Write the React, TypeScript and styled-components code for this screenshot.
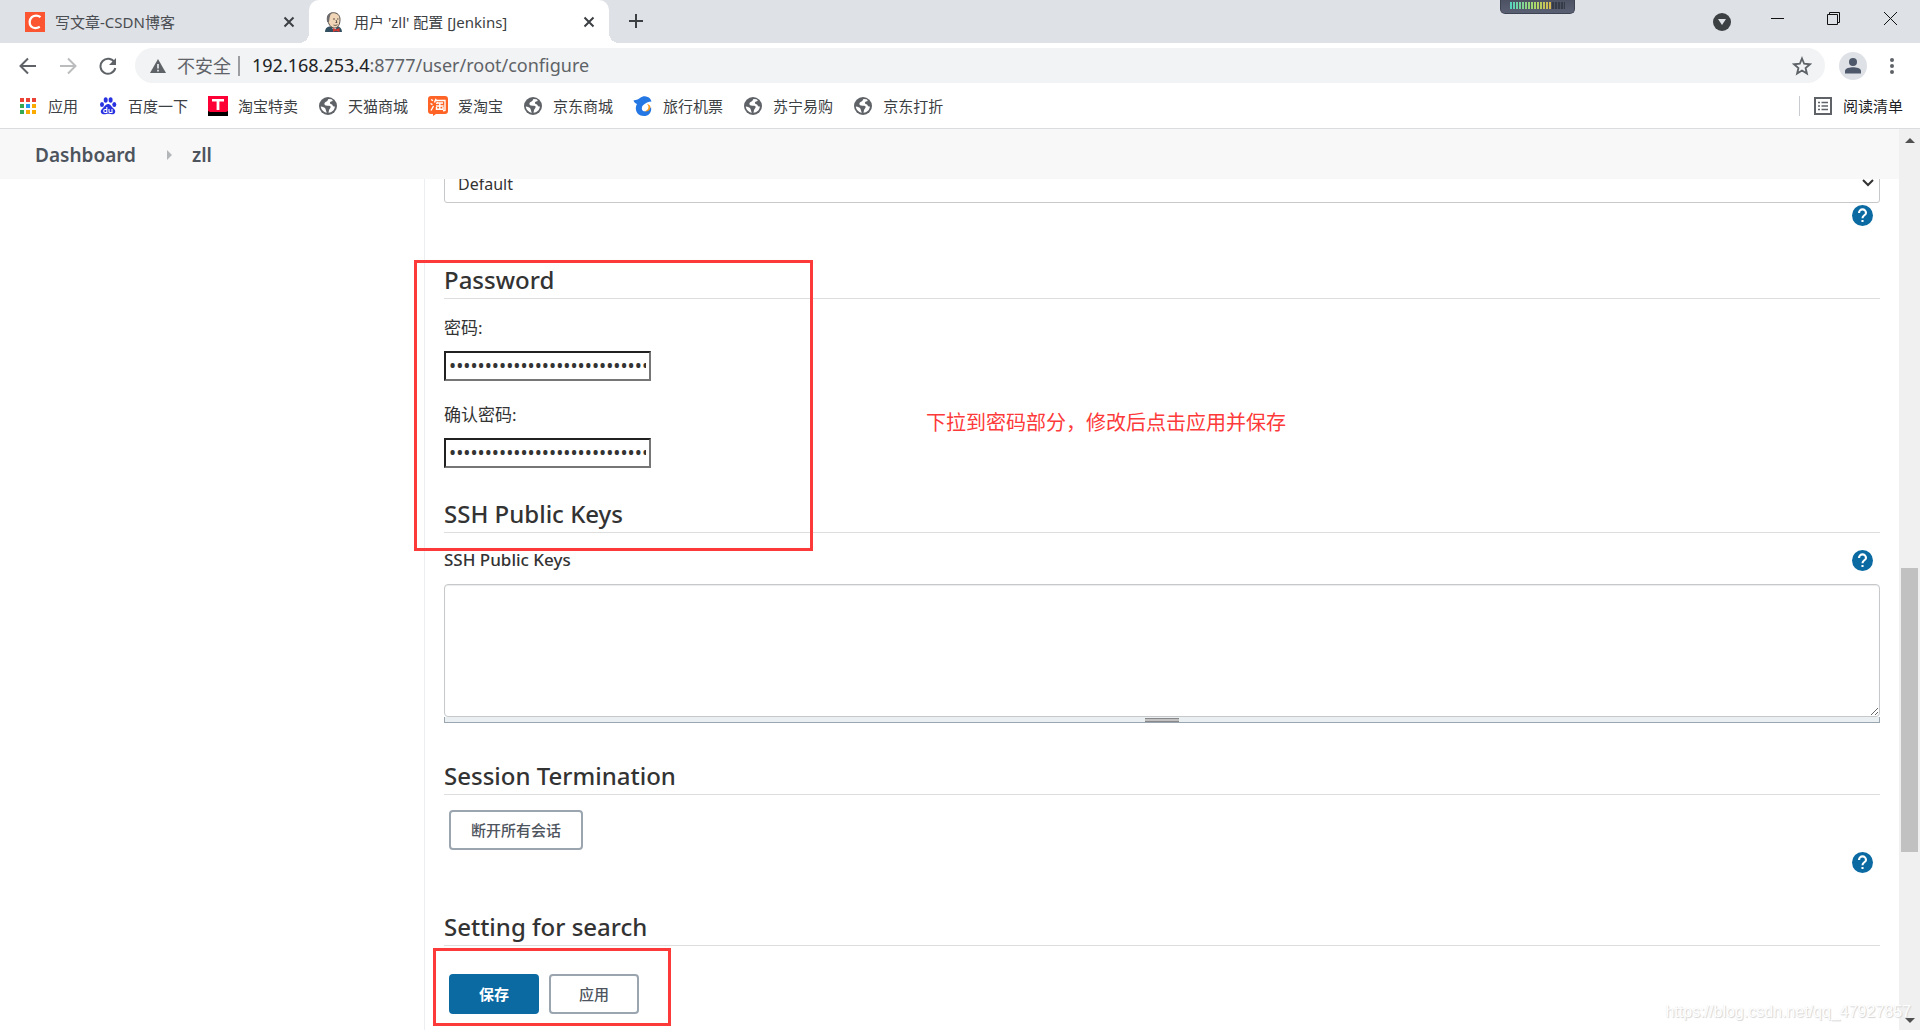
import React from "react";
import styled, { createGlobalStyle } from "styled-components";

const ui = `"Noto Sans", "Noto Sans CJK SC", sans-serif`;

const GlobalStyle = createGlobalStyle`
  *, *::before, *::after { box-sizing: border-box; }
  html, body, #root { height: 100%; }
  body { margin: 0; background: #fff; color: #333; font-family: ${ui}; overflow: hidden; }
  button, input, select, textarea { font-family: inherit; margin: 0; }
`;

const Window = styled.div`
  display: flex;
  flex-direction: column;
  height: 100vh;
  position: relative;
  overflow: hidden;
`;

const PlainButton = styled.button<{ $size?: number }>`
  display: inline-flex;
  flex: none;
  align-items: center;
  justify-content: center;
  width: ${(p) => p.$size ?? 24}px;
  height: ${(p) => p.$size ?? 24}px;
  padding: 0;
  border: 0;
  background: none;
  color: #5f6368;
`;

/* ---------- tab strip ---------- */

const TabStrip = styled.div`
  display: flex;
  flex: none;
  height: 43px;
  background: #dee1e6;
`;

const Tab = styled.div<{ $active?: boolean }>`
  position: relative;
  display: flex;
  align-items: center;
  gap: 10px;
  width: ${(p) => (p.$active ? 300 : 309)}px;
  padding: 0 8px 0 ${(p) => (p.$active ? 15 : 25)}px;
  border-radius: 10px 10px 0 0;
  background: ${(p) => (p.$active ? "#fff" : "transparent")};
  color: ${(p) => (p.$active ? "#3c4043" : "#4a4d51")};
  font-size: 15px;

  &::before, &::after {
    content: "";
    display: ${(p) => (p.$active ? "block" : "none")};
    position: absolute;
    bottom: 0;
    width: 10px;
    height: 10px;
  }
  &::before {
    right: 100%;
    background: radial-gradient(circle at 0 0, transparent 10px, #fff 10px);
  }
  &::after {
    left: 100%;
    background: radial-gradient(circle at 100% 0, transparent 10px, #fff 10px);
  }
`;

const TabTitle = styled.span`
  flex: 1;
  white-space: nowrap;
`;

const NewTab = styled(PlainButton)`
  margin: 9px 0 0 15px;
  color: #3c4043;
`;

const WindowControls = styled.div`
  display: flex;
  align-items: center;
  height: 37px;
  margin-left: auto;
  color: #000;
`;

const ControlButton = styled(PlainButton)<{ $wide?: boolean }>`
  width: ${(p) => (p.$wide ? 58 : 56)}px;
  color: #111;
`;

const Meter = styled.div`
  position: absolute;
  top: 0;
  right: 345px;
  width: 75px;
  height: 14px;
  padding: 2px 9px 0;
  border: 1px solid #3e4352;
  border-top: 0;
  border-radius: 0 0 5px 5px;
  background: linear-gradient(#4d5263, #5a6073);
`;

const MeterBars = styled.div`
  height: 7px;
  background:
    repeating-linear-gradient(90deg, transparent 0 2px, #4d5263 2px 3px),
    linear-gradient(90deg, #55d6c2, #a9d86a 45%, #d9b64c 75%, #363b48 75%);
`;

/* ---------- toolbar ---------- */

const Toolbar = styled.div`
  display: flex;
  flex: none;
  align-items: center;
  height: 45px;
  padding: 0 16px;
`;

const NavButtons = styled.div`
  display: flex;
  gap: 16px;
  margin-right: 15px;
`;

const Omnibox = styled.div`
  display: flex;
  flex: 1;
  align-items: center;
  height: 35px;
  padding: 0 11px 0 14px;
  border-radius: 18px;
  background: #f1f3f4;
  color: #5f6368;
  font-size: 18px;
`;

const Insecure = styled.span`
  display: flex;
  align-items: center;
  gap: 10px;
  padding-right: 7px;
  margin-right: 12px;
  line-height: 20px;
  border-right: 2px solid #9b9da1;
`;

const Url = styled.span`
  flex: 1;
  padding-bottom: 2px;
  b { color: #202124; font-weight: 400; }
`;

const Avatar = styled(PlainButton)`
  margin: 0 13px 0 14px;
  border-radius: 50%;
  background: #dee1e6;
`;

/* ---------- bookmarks ---------- */

const Bookmarks = styled.nav`
  display: flex;
  flex: none;
  align-items: center;
  gap: 20px;
  height: 41px;
  padding: 0 18px 5px;
  border-bottom: 1px solid #dadce0;
`;

const Bookmark = styled.a`
  display: flex;
  align-items: center;
  gap: 10px;
  color: #3c4043;
  font-size: 15px;
  line-height: 20px;
  text-decoration: none;
  white-space: nowrap;
  svg { flex: none; }
`;

const ReadingList = styled(Bookmark)`
  margin-left: auto;
  margin-right: -1px;
  padding-left: 13px;
  border-left: 1px solid #c8cbcf;
  color: #202124;
`;

/* ---------- page ---------- */

const Page = styled.div`
  display: flex;
  flex: 1;
  min-height: 0;
`;

const Document = styled.div`
  display: flex;
  flex: 1;
  flex-direction: column;
  min-width: 0;
`;

const Breadcrumbs = styled.nav`
  display: flex;
  flex: none;
  align-items: center;
  height: 50px;
  padding: 2px 35px 0;
  background: #f8f8f8;
`;

const Crumb = styled.a`
  color: #4d545d;
  font-size: 19px;
  font-weight: 600;
  text-decoration: none;
`;

const CrumbArrow = styled.span`
  margin: 0 20px 0 31px;
  border: 5px solid transparent;
  border-left-color: #b4b7ba;
  border-right-width: 0;
`;

const Body = styled.div`
  display: grid;
  flex: 1;
  grid-template-columns: 424px 1fr;
  min-height: 0;
  overflow: hidden;
`;

const Main = styled.main`
  min-width: 0;
  padding: 0 19px;
  border-left: 1px solid #ebeff2;
`;

const SelectField = styled.div`
  position: relative;
  margin-top: -16px;
  svg {
    position: absolute;
    top: 15px;
    right: 6px;
    pointer-events: none;
  }
`;

const SelectBox = styled.select`
  display: block;
  width: 100%;
  height: 40px;
  padding: 2px 13px 0;
  border: 1px solid #c6c8ca;
  border-radius: 3px;
  appearance: none;
  background: #fff;
  color: #333;
  font-size: 16px;
`;

const HelpRow = styled.div`
  display: flex;
  justify-content: flex-end;
  padding: 2px 7px 0 0;
`;

const Section = styled.section<{ $height: number }>`
  min-height: ${(p) => p.$height}px;
`;

const Heading = styled.h2`
  margin: 0 0 15px;
  padding-bottom: 2px;
  border-bottom: 1px solid #dedede;
  color: #333;
  font-size: 24px;
  font-weight: 500;
  line-height: 32px;
`;

const Field = styled.div`
  display: flex;
  flex-direction: column;
  align-items: flex-start;
  gap: 9px;
  margin-bottom: 20px;
`;

const FieldLabel = styled.label`
  font-size: 17px;
  line-height: 28px;
`;

const PasswordInput = styled.input`
  width: 207px;
  height: 30px;
  padding: 1px 3px;
  border: 2px inset #767676;
  border-radius: 0;
  background: #fff;
  color: #333;
  font-size: 19px;
`;

const LabelRow = styled.div`
  display: flex;
  align-items: center;
  justify-content: space-between;
  margin-bottom: 12px;
  padding-right: 7px;
`;

const KeysLabel = styled.label`
  font-size: 17px;
  font-weight: 500;
  line-height: 24px;
`;

const KeysArea = styled.textarea`
  display: block;
  width: 100%;
  height: 133px;
  border: 1px solid #c6c8ca;
  border-radius: 4px;
  background: #fff;
  box-shadow: inset 0 1px 1px rgba(0, 0, 0, 0.08);
`;

const Grip = styled.div`
  display: flex;
  justify-content: center;
  height: 6px;
  border: 1px solid #9aa5af;
  border-top: 0;
  background: #eaeff2;
  &::after {
    content: "";
    width: 34px;
    height: 4px;
    margin-top: 1px;
    border: 1px solid #888;
    border-width: 1px 0;
    background: #c2c2c2;
  }
`;

const Actions = styled.div<{ $top?: number }>`
  display: flex;
  gap: 10px;
  padding: ${(p) => p.$top ?? 0}px 5px 0;
`;

const ActionButton = styled.button<{ $primary?: boolean }>`
  min-width: 90px;
  height: 40px;
  padding: 0 20px 1px;
  border: 2px solid ${(p) => (p.$primary ? "#0b6aa2" : "#9aa5af")};
  border-radius: 4px;
  background: ${(p) => (p.$primary ? "#0b6aa2" : "#fff")};
  color: ${(p) => (p.$primary ? "#fff" : "#4d545d")};
  font-size: 15px;
  font-weight: ${(p) => (p.$primary ? 700 : 500)};
`;

const ScrollTrack = styled.div`
  display: flex;
  flex: none;
  flex-direction: column;
  align-items: center;
  width: 21px;
  padding: 9px 0 7px;
  background: #f0f0f0;
`;

const ScrollArrow = styled.span<{ $down?: boolean }>`
  border: 5px solid transparent;
  border-${(p) => (p.$down ? "top" : "bottom")}-color: #505050;
  border-${(p) => (p.$down ? "bottom" : "top")}-width: 0;
  ${(p) => !p.$down && "margin-bottom: 425px;"}
`;

const ScrollThumb = styled.div`
  width: 17px;
  height: 284px;
  margin-bottom: auto;
  background: #c1c1c1;
`;

/* ---------- annotations over the page ---------- */

const Mark = styled.div<{ $x: number; $y: number; $w: number; $h: number }>`
  position: absolute;
  left: ${(p) => p.$x}px;
  top: ${(p) => p.$y}px;
  width: ${(p) => p.$w}px;
  height: ${(p) => p.$h}px;
  border: 3px solid #fd3a3a;
  pointer-events: none;
`;

const Note = styled.p`
  position: absolute;
  left: 926px;
  top: 408px;
  margin: 0;
  color: #fd3a3a;
  font-size: 20px;
  line-height: 30px;
`;

const Watermark = styled.span`
  position: absolute;
  right: 9px;
  bottom: 8px;
  color: #fff;
  font-family: "Liberation Sans", sans-serif;
  font-size: 16px;
  line-height: 20px;
  text-shadow: 1px 1px 1px #d4d4d4, 0 0 1px #e4e4e4;
`;

/* ---------- drawings ---------- */

const CloseIcon = () => (
  <svg width="12" height="12" viewBox="0 0 12 12"><path d="M1.5 1.5l9 9M10.5 1.5l-9 9" stroke="#3c4043" strokeWidth="2" /></svg>
);

const CsdnIcon = () => (
  <svg width="20" height="20" viewBox="0 0 20 20">
    <path fill="#fc5531" d="M0 0h20v20H0z" />
    <path d="M15.5 5.2C13 3 9.200 3 6.800 5.200c-2.600 2.500-2.900 7-.6 9.300 2 2 5.800 2 8.600.3" fill="none" stroke="#fff" strokeWidth="2.300" />
  </svg>
);

const JenkinsIcon = () => (
  <svg width="20" height="20" viewBox="0 0 20 20">
    <path d="M1 20c0-3 1.500-5 4-5.500l8-.5c3 .5 5 2.500 5 6z" fill="#335061" />
    <path d="M7 14l3 5 4-5z" fill="#fff" />
    <path d="M3.500 7C3.500 3 6 .7 9.500.7S16 3 16 7.500c0 5-2 8.500-5.500 8.500S4 12 3.500 7z" fill="#f0d6b7" stroke="#49423d" strokeWidth=".9" />
    <path d="M3.200 10C2 5 3.500 1 8.500.6 5.500 2.500 5.800 6 5 10z" fill="#6d6b6d" />
    <path d="M9 7h2M13 7h1.500M12 8l1 2.500h-1.500M9.500 13c1.500.6 2.500.5 4-.3" stroke="#49423d" strokeWidth=".9" fill="none" />
    <path d="M9 16l3 1.500 3.500-1.500v4l-3.500-1.200L9 20z" fill="#d33833" />
  </svg>
);

const GlobeIcon = () => (
  <svg width="20" height="20" viewBox="0 0 20 20">
    <circle cx="10" cy="10" r="9" fill="#5f6368" />
    <path d="M10.500 3c-1 1-.5 1.800-2 2.500S6 7 6.500 8.500 9 9.500 11 9.700s2 1.500 1 2.800-1 1.500-1.500 4.300c3.500-.2 6.200-3 6.400-6.300-1.400.3-2.200-.5-2.500-1.500s-1.600-.8-2.300-1.600.5-2 1.900-2.200.3-1.700-.5-2z" fill="#fff" />
    <path d="M2.800 10.500c2 .2 4 1 4.500 2s.7 2.300 1.500 4.200c-3.300-.6-5.700-3-6-6.200z" fill="#fff" />
  </svg>
);

const AppsIcon = () => (
  <svg width="20" height="20" viewBox="0 0 20 20">
    {["#ea4335", "#ea4335", "#ea4335", "#34a853", "#2196f3", "#fbab00", "#34a853", "#fbab00", "#fbab00"].map((c, i) => (
      <rect key={i} x={2 + (i % 3) * 6} y={2 + Math.floor(i / 3) * 6} width="4" height="4" fill={c} />
    ))}
  </svg>
);

const BaiduIcon = () => (
  <svg width="20" height="20" viewBox="0 0 20 20" fill="#2932e1">
    <ellipse cx="4" cy="8.500" rx="2" ry="2.600" />
    <ellipse cx="7.700" cy="4" rx="2" ry="2.800" />
    <ellipse cx="12.600" cy="4" rx="2" ry="2.800" />
    <ellipse cx="16.300" cy="8.500" rx="2" ry="2.600" />
    <path d="M10 8c2.500 0 3.300 2.500 5 4s2.500 2.300 2.200 4-1.700 2.500-3.500 2.300-2.300-.5-3.700-.5-2 .5-3.700.5-3.300-.6-3.500-2.300.7-2.500 2.200-4S7.500 8 10 8z" />
    <path d="M8.800 11v5.500H7.200c-2 0-2-3 0-3h1.600M11 13v2.500c0 1 .5 1 1.200 1H14V13" fill="none" stroke="#fff" strokeWidth="1.100" />
  </svg>
);

const TmallIcon = () => (
  <svg width="20" height="20" viewBox="0 0 20 20">
    <path d="M0 0h20v20H0z" /><path d="M0 0h20v15l-2 1H2l-2-1z" fill="#ff0036" />
    <path d="M4 3h12v2.500h-4.600V14H8.600V5.500H4z" fill="#fff" />
  </svg>
);

const TaobaoIcon = () => (
  <svg width="20" height="20" viewBox="0 0 20 20">
    <path d="M3 0h14a3 3 0 013 3v12a3 3 0 01-3 3H8l-3 2v-2H3a3 3 0 01-3-3V3a3 3 0 013-3z" fill="#ff6426" />
    <path d="M3 3.500l2 1.200M2.500 7.500l2 1.200M3 14.500L5.500 10M8 2.800L6.500 6.500M7.500 4.500H17v10l-2 .3M9.500 6l-1 2M9 7h6M8 10h7.500M11.800 7v6M8.500 11v2.300h6.500V11" fill="none" stroke="#fff" strokeWidth="1.400" />
  </svg>
);

const DolphinIcon = () => (
  <svg width="20" height="20" viewBox="0 0 20 20">
    <path d="M.5 4.500C3 4 5 3.500 7 2c2.500-2 5.500-2.200 7.500-1 2 .4 3.200 1.800 4 4.500-1.500 0-3 .2-4.500 1C11 8 9 9.500 8.800 12c-.1 2.500 1.500 3.500 3.500 3.300 2.500-.3 4-1.800 5.700-4.300 1 5-2 9-7 9C6 20 3 17 2.800 12.500 2.700 11 3.200 9.500 4 8 2.500 7.500 1 6.500.5 4.500z" fill="#2577e3" />
    <path d="M14 8c2.800 2.500 1.500 6.300-2.300 7.300 3.800.7 6.300-2 5.500-5.300C16.500 9 15.500 8.300 14 8z" fill="#ff9a14" />
  </svg>
);

const HelpIcon = () => (
  <svg width="21" height="21" viewBox="0 0 24 24">
    <circle cx="12" cy="12" r="12" fill="#0b6aa2" />
    <path d="M8 9a4 4 0 118 0c0 2.600-4 3-4 6M12 17v2.400" fill="none" stroke="#fff" strokeWidth="2.400" />
  </svg>
);

const bookmarks: [string, () => React.ReactElement][] = [
  ["应用", AppsIcon],
  ["百度一下", BaiduIcon],
  ["淘宝特卖", TmallIcon],
  ["天猫商城", GlobeIcon],
  ["爱淘宝", TaobaoIcon],
  ["京东商城", GlobeIcon],
  ["旅行机票", DolphinIcon],
  ["苏宁易购", GlobeIcon],
  ["京东打折", GlobeIcon],
];

const Help = () => (
  <PlainButton $size={21} type="button" aria-label="Help"><HelpIcon /></PlainButton>
);

export default function App() {
  return (
    <Window>
      <GlobalStyle />
      <TabStrip>
        <Tab>
          <CsdnIcon />
          <TabTitle>写文章-CSDN博客</TabTitle>
          <PlainButton aria-label="关闭标签页"><CloseIcon /></PlainButton>
        </Tab>
        <Tab $active>
          <JenkinsIcon />
          <TabTitle>用户 'zll' 配置 [Jenkins]</TabTitle>
          <PlainButton aria-label="关闭标签页"><CloseIcon /></PlainButton>
        </Tab>
        <NewTab aria-label="新标签页">
          <svg width="16" height="16" viewBox="0 0 16 16"><path d="M8 1v14M1 8h14" stroke="currentColor" strokeWidth="2" /></svg>
        </NewTab>
        <WindowControls>
          <ControlButton aria-label="搜索标签页">
            <svg width="18" height="24" viewBox="0 0 18 24"><circle cx="9" cy="15" r="9" fill="#3c4043" /><path d="M5 12h8l-4 6z" fill="#dee1e6" /></svg>
          </ControlButton>
          <ControlButton aria-label="最小化">
            <svg width="14" height="13" viewBox="0 0 14 13"><path d="M0 6.500h13" stroke="currentColor" /></svg>
          </ControlButton>
          <ControlButton aria-label="还原">
            <svg width="14" height="13" viewBox="0 0 14 13" fill="none" stroke="currentColor"><path d="M.5 2.500h10v10H.5zM2.500 2.500v-2h10v10h-2" /></svg>
          </ControlButton>
          <ControlButton $wide aria-label="关闭">
            <svg width="14" height="13" viewBox="0 0 14 13" stroke="currentColor"><path d="M0 0l13 13M13 0L0 13" /></svg>
          </ControlButton>
        </WindowControls>
      </TabStrip>
      <Meter><MeterBars /></Meter>

      <Toolbar>
        <NavButtons>
          <PlainButton aria-label="后退">
            <svg width="18" height="18" viewBox="0 0 18 18" fill="none" stroke="#5f6368" strokeWidth="2"><path d="M17 9H2M9 1.500L1.500 9 9 16.500" /></svg>
          </PlainButton>
          <PlainButton aria-label="前进">
            <svg width="18" height="18" viewBox="0 0 18 18" fill="none" stroke="#babcbe" strokeWidth="2"><path d="M1 9h15M9 1.500L16.500 9 9 16.500" /></svg>
          </PlainButton>
          <PlainButton aria-label="重新加载">
            <svg width="18" height="18" viewBox="0 0 18 18"><path d="M15.500 5.500A7.500 7.500 0 1016.300 11" fill="none" stroke="#5f6368" strokeWidth="2" /><path d="M17 1v7h-7z" fill="#5f6368" /></svg>
          </PlainButton>
        </NavButtons>
        <Omnibox>
          <Insecure>
            <svg width="18" height="18" viewBox="0 0 18 18"><path d="M9 2l8 14H1z" fill="#5f6368" /><path d="M9 7v4.500M9 12.700v1.800" stroke="#f1f3f4" strokeWidth="1.600" /></svg>
            不安全
          </Insecure>
          <Url><b>192.168.253.4</b>:8777/user/root/configure</Url>
          <PlainButton aria-label="收藏">
            <svg width="20" height="20" viewBox="0 0 24 24"><path d="M12 3l2.600 6.300 6.900.6-5.200 4.500 1.600 6.700-5.900-3.600-5.900 3.600 1.600-6.700-5.200-4.500 6.900-.6z" fill="none" stroke="#5f6368" strokeWidth="2.200" /></svg>
          </PlainButton>
        </Omnibox>
        <Avatar $size={28} aria-label="用户">
          <svg width="18" height="18" viewBox="0 0 18 18" fill="#4d586b"><circle cx="9" cy="5" r="4" /><path d="M1 16.500V14c0-3 5-3.800 8-3.800s8 .8 8 3.800v2.500z" /></svg>
        </Avatar>
        <PlainButton aria-label="菜单">
          <svg width="18" height="18" viewBox="0 0 18 18" fill="#5f6368"><circle cx="9" cy="3" r="2" /><circle cx="9" cy="9" r="2" /><circle cx="9" cy="15" r="2" /></svg>
        </PlainButton>
      </Toolbar>

      <Bookmarks>
        {bookmarks.map(([name, Icon]) => (
          <Bookmark href="#" key={name}><Icon />{name}</Bookmark>
        ))}
        <ReadingList href="#">
          <svg width="20" height="20" viewBox="0 0 20 20"><path d="M2 2h16v16H2z" fill="none" stroke="#5f6368" strokeWidth="2" /><path d="M5 6.500h2M8.500 6.500H15M5 10h2M8.500 10H15M5 13.500h2M8.500 13.500H15" stroke="#5f6368" strokeWidth="1.500" /></svg>
          阅读清单
        </ReadingList>
      </Bookmarks>

      <Page>
        <Document>
          <Breadcrumbs>
            <Crumb href="#">Dashboard</Crumb>
            <CrumbArrow />
            <Crumb href="#">zll</Crumb>
          </Breadcrumbs>
          <Body>
            <aside />
            <Main>
              <SelectField>
                <SelectBox aria-label="Time zone" defaultValue="Default"><option>Default</option></SelectBox>
                <svg width="12" height="10" viewBox="0 0 12 10"><path d="M1 2l5 5 5-5" fill="none" stroke="#333" strokeWidth="2" /></svg>
              </SelectField>
              <Section $height={61}><HelpRow><Help /></HelpRow></Section>

              <Section $height={234}>
                <Heading>Password</Heading>
                <Field>
                  <FieldLabel htmlFor="password">密码:</FieldLabel>
                  <PasswordInput id="password" type="password" defaultValue={"x".repeat(40)} />
                </Field>
                <Field>
                  <FieldLabel htmlFor="confirm">确认密码:</FieldLabel>
                  <PasswordInput id="confirm" type="password" defaultValue={"x".repeat(40)} />
                </Field>
              </Section>

              <Section $height={262}>
                <Heading>SSH Public Keys</Heading>
                <LabelRow>
                  <KeysLabel htmlFor="keys">SSH Public Keys</KeysLabel>
                  <Help />
                </LabelRow>
                <KeysArea id="keys" />
                <Grip />
              </Section>

              <Section $height={151}>
                <Heading>Session Termination</Heading>
                <Actions><ActionButton type="button">断开所有会话</ActionButton></Actions>
                <HelpRow><Help /></HelpRow>
              </Section>

              <Section $height={120}>
                <Heading>Setting for search</Heading>
                <Actions $top={13}>
                  <ActionButton type="submit" $primary>保存</ActionButton>
                  <ActionButton type="button">应用</ActionButton>
                </Actions>
              </Section>
            </Main>
          </Body>
        </Document>
        <ScrollTrack>
          <ScrollArrow />
          <ScrollThumb />
          <ScrollArrow $down />
        </ScrollTrack>
      </Page>

      <Mark $x={414} $y={260} $w={399} $h={291} />
      <Mark $x={433} $y={948} $w={238} $h={78} />
      <Note>下拉到密码部分，修改后点击应用并保存</Note>
      <Watermark>https://blog.csdn.net/qq_47927857</Watermark>
    </Window>
  );
}
